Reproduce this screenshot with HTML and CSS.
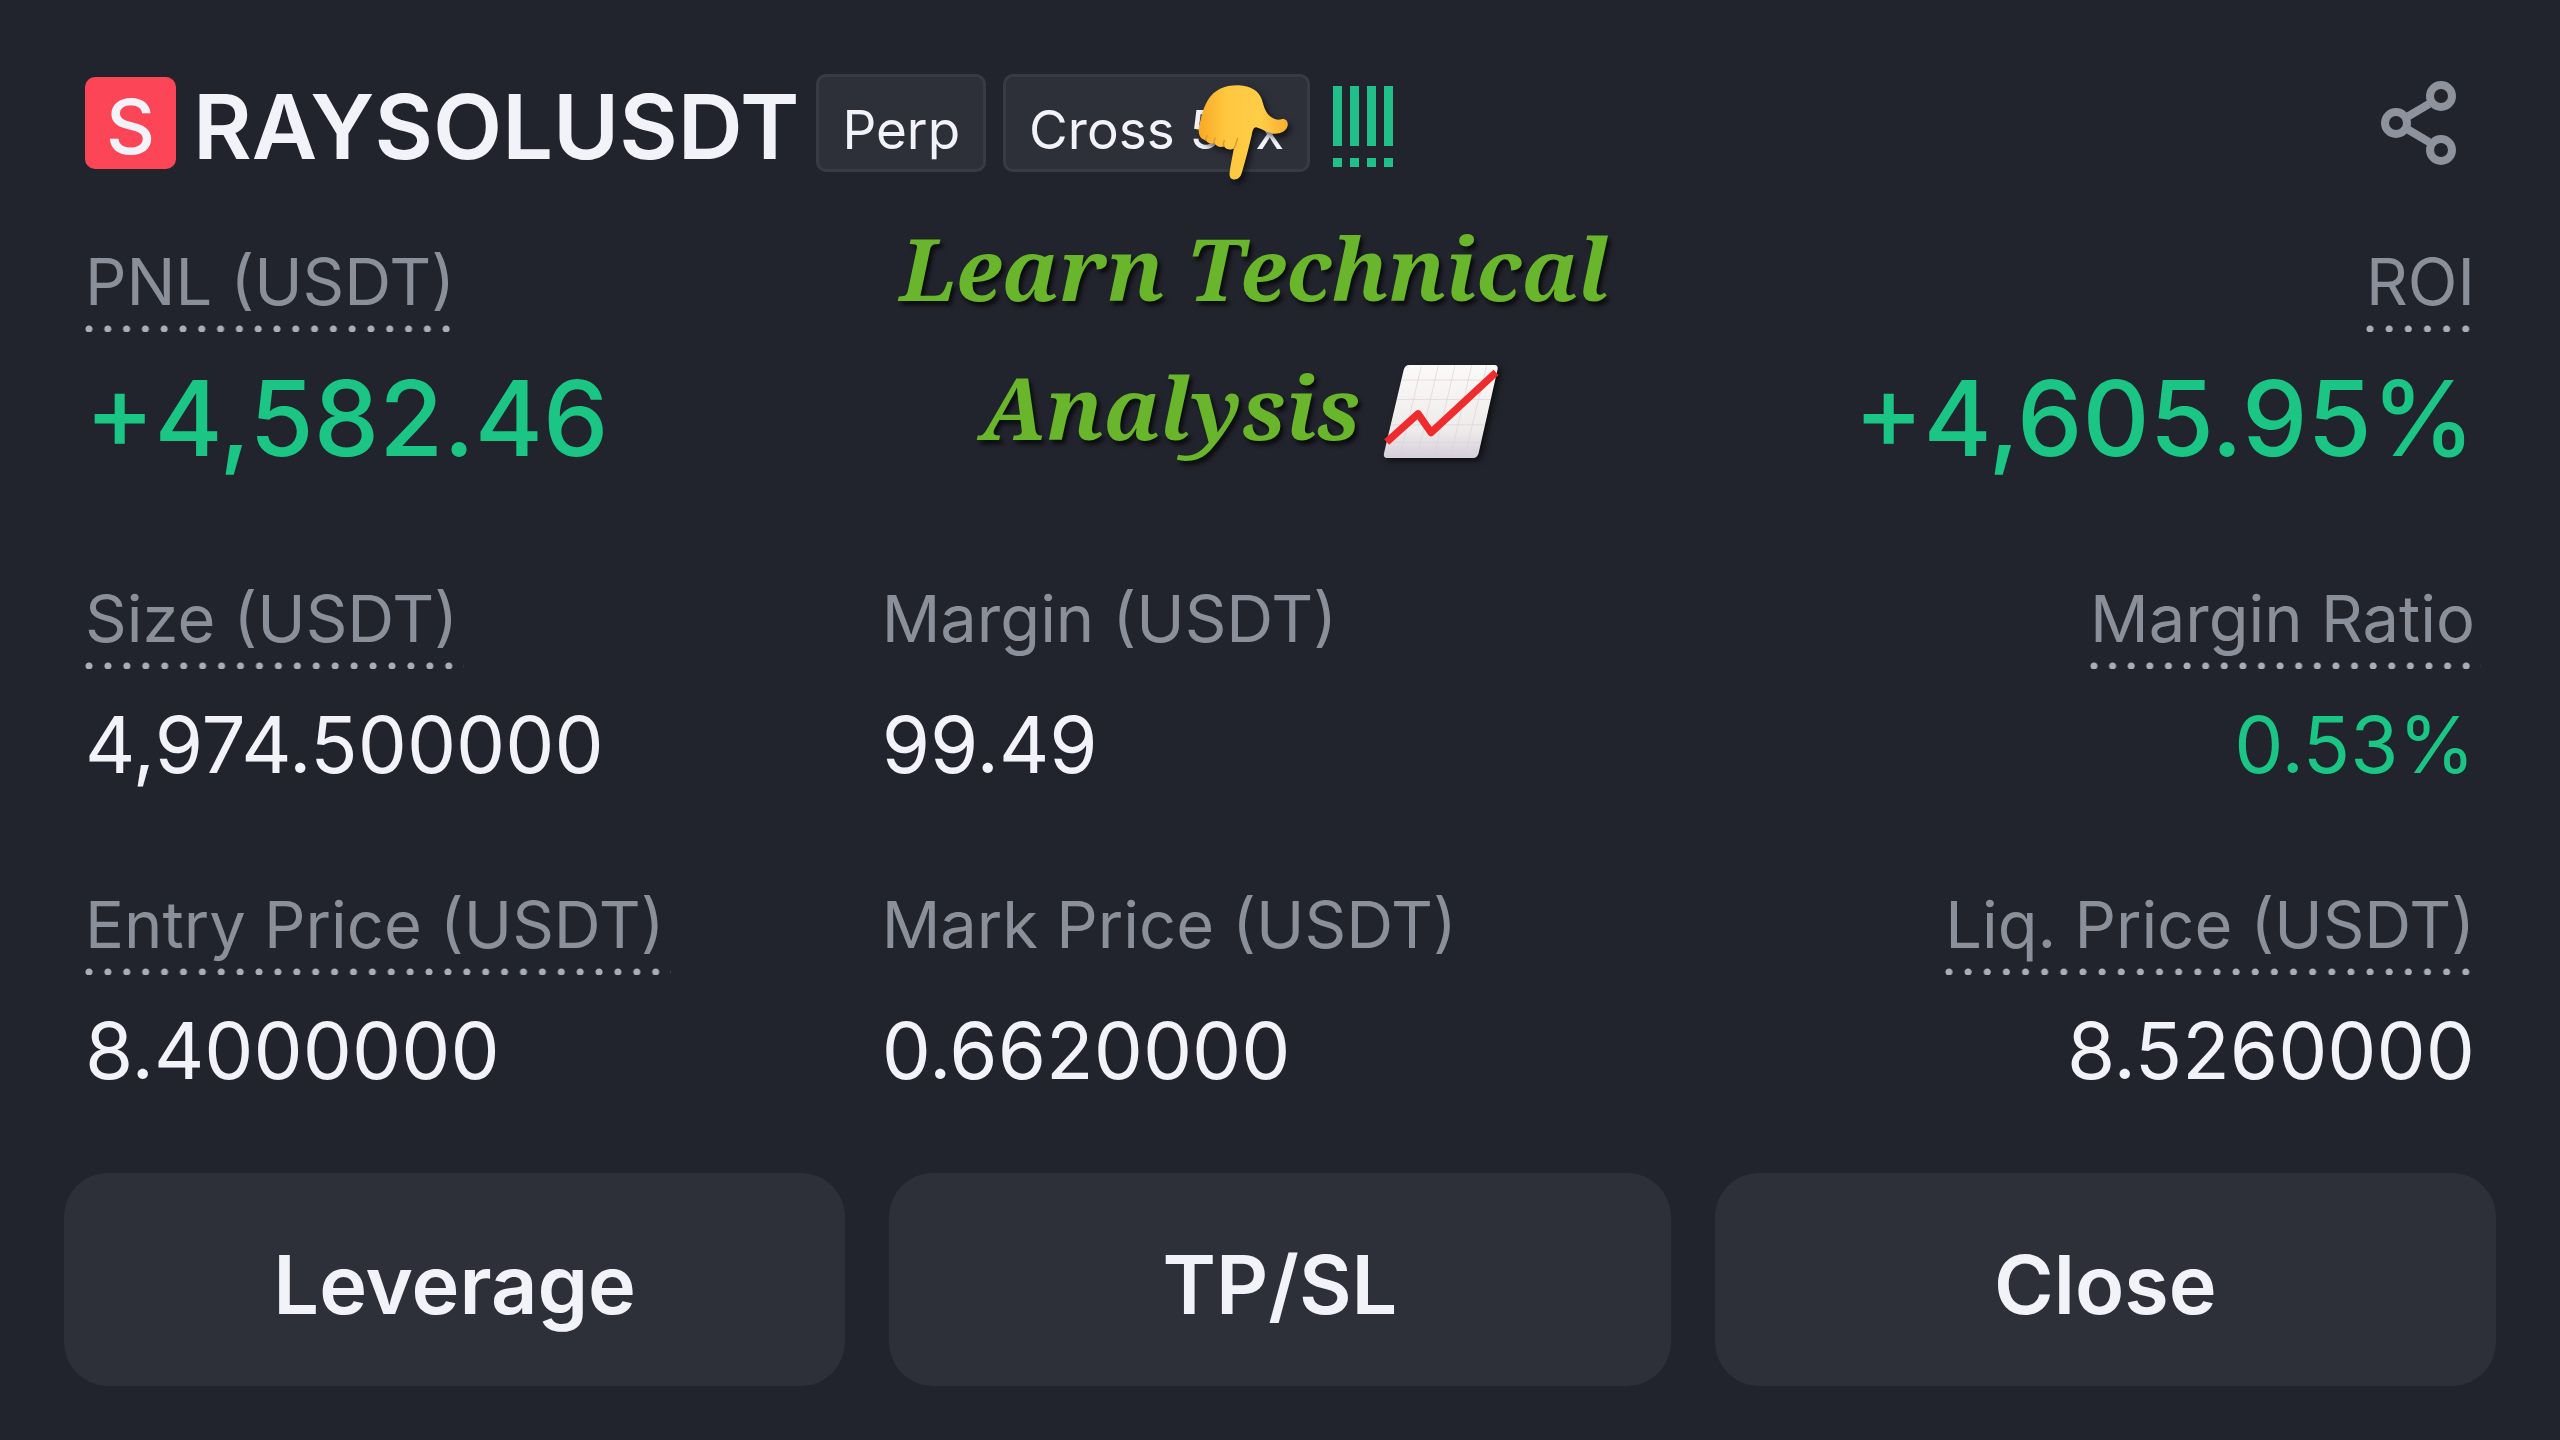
FILE: index.html
```html
<!DOCTYPE html>
<html lang="en">
<head>
    <meta charset="UTF-8">
    <meta name="viewport" content="width=device-width, initial-scale=1.0">
    <title>RAYSOLUSDT Position</title>
    <link rel="stylesheet" href="styles.css">
</head>
<body>
    <main class="position">
        <header class="header">
            <span class="side">S</span>
            <h1>RAYSOLUSDT</h1>
            <span class="tag">Perp</span>
            <span class="tag">Cross 50x
                <svg class="hand" viewBox="190 70 280 300" aria-hidden="true">
                    <defs>
                        <linearGradient id="skin" x1="0" y1="0" x2="1" y2="0">
                            <stop offset="0" stop-color="#f9a825"/>
                            <stop offset="0.3" stop-color="#ffc73f"/>
                            <stop offset="0.7" stop-color="#ffcd48"/>
                            <stop offset="1" stop-color="#f8ae2c"/>
                        </linearGradient>
                    </defs>
                    <path fill="url(#skin)" d="M195 212C200 180 206 150 222 122C242 88 275 75 316 76C352 78 375 92 384 116C391 136 394 158 412 171C424 180 436 182 446 178C458 176 465 186 463 198C459 214 441 223 422 222C402 220 386 208 368 203C360 203 358 212 355 224C347 262 335 305 325 340C321 354 312 361 301 360C291 359 287 352 288 341C291 315 297 290 301 266C293 272 279 272 271 260C262 264 249 262 242 250C231 254 222 250 218 243C203 240 195 230 195 212Z"/>
                    <path fill="none" stroke="#e8962a" stroke-width="4" stroke-linecap="round" d="M218 243C215 238 217 232 221 228M242 250C240 244 241 239 245 235M271 260C268 254 269 247 273 242M301 266C307 258 309 248 312 236"/>
                </svg>
            </span>
            <svg class="risk" viewBox="0 0 60 82" aria-hidden="true">
                <path d="M0 0h9v60h-9zM17 0h9v60h-9zM34 0h9v60h-9zM51 0h9v60h-9zM0 72h9v9h-9zM17 72h9v9h-9zM34 72h9v9h-9zM51 72h9v9h-9z"/>
            </svg>
            <button class="share" aria-label="Share">
                <svg viewBox="0 0 78 88">
                    <path d="M27 38L49 25M27 50L49 63"/>
                    <circle cx="16" cy="44" r="11"/>
                    <circle cx="61" cy="17" r="11"/>
                    <circle cx="61" cy="71" r="11"/>
                </svg>
            </button>
        </header>

        <section class="stats">
            <div class="stat main">
                <span class="label dotted">PNL (USDT)</span>
                <span class="value">+4,582.46</span>
            </div>
            <p class="banner">Learn Technical<br>Analysis
                <svg class="chart" viewBox="130 70 350 290" aria-hidden="true">
                    <defs>
                        <linearGradient id="paper" x1="0" y1="0" x2="0" y2="1">
                            <stop offset="0" stop-color="#fbfaf9"/>
                            <stop offset="0.7" stop-color="#eeecea"/>
                            <stop offset="1" stop-color="#d5cfda"/>
                        </linearGradient>
                    </defs>
                    <path fill="url(#paper)" d="M208 76H464Q474 76 473 88L416 340Q412 354 400 354H142Q130 354 133 340L192 90Q196 76 208 76Z"/>
                    <path fill="none" stroke="#d9d2d8" stroke-width="2" d="M186 121H463M172 179H450M155 255H432M142 307H421M245 78L180 352M295 78L232 352M345 78L282 352M395 78L332 352M440 78L374 352"/>
                    <path fill="none" stroke="#ef2b2d" stroke-width="22" stroke-linejoin="round" d="M141 306L235 222L274 278L468 98"/>
                </svg>
            </p>
            <div class="stat main right">
                <span class="label dotted">ROI</span>
                <span class="value">+4,605.95%</span>
            </div>

            <div class="stat">
                <span class="label dotted">Size (USDT)</span>
                <span class="value">4,974.500000</span>
            </div>
            <div class="stat">
                <span class="label">Margin (USDT)</span>
                <span class="value">99.49</span>
            </div>
            <div class="stat right">
                <span class="label dotted">Margin Ratio</span>
                <span class="value green">0.53%</span>
            </div>

            <div class="stat">
                <span class="label dotted">Entry Price (USDT)</span>
                <span class="value">8.4000000</span>
            </div>
            <div class="stat">
                <span class="label">Mark Price (USDT)</span>
                <span class="value">0.6620000</span>
            </div>
            <div class="stat right">
                <span class="label dotted">Liq. Price (USDT)</span>
                <span class="value">8.5260000</span>
            </div>
        </section>

        <div class="actions">
            <button>Leverage</button>
            <button>TP/SL</button>
            <button>Close</button>
        </div>
    </main>
</body>
</html>
```
FILE: styles.css
```css
* {
    box-sizing: border-box;
}
body {
    margin: 0;
    background: #21242c;
    color: #f1f3f8;
    font-family: Inter, "Liberation Sans", sans-serif;
}
.position {
    padding: 74px 64px 54px;
}
.header {
    display: flex;
    align-items: center;
    gap: 17px;
    padding: 0 21px;
    margin-bottom: 70px;
}
.side {
    width: 91px;
    height: 92px;
    padding-top: 3px;
    border-radius: 10px;
    background: #fd4558;
    font-size: 76px;
    font-weight: 500;
    line-height: 92px;
    text-align: center;
}
h1 {
    margin: 0;
    padding-top: 8px;
    font-size: 90px;
    font-weight: 600;
    line-height: 90px;
}
.tag {
    position: relative;
    height: 98px;
    padding: 13px 23px 0;
    border: 3px solid #383b45;
    border-radius: 10px;
    background: #2d3039;
    font-size: 53px;
    line-height: 80px;
    white-space: nowrap;
}
/* pointer lies over the leverage tag */
.hand {
    position: absolute;
    top: 6px;
    right: 17px;
    width: 93px;
    height: 100px;
    filter: drop-shadow(3px 4px 3px rgba(0, 0, 0, 0.6));
}
.risk {
    width: 60px;
    height: 82px;
    margin-top: 8px;
    margin-left: 6px;
    fill: #20c088;
}
.share {
    width: 78px;
    height: 88px;
    margin-right: 17px;
    margin-left: auto;
    padding: 0;
    border: none;
    background: none;
    cursor: pointer;
}
.share svg {
    display: block;
    fill: none;
    stroke: #8d929c;
    stroke-width: 8;
}
.stats {
    display: grid;
    grid-template-columns: repeat(3, minmax(0, 1fr));
    row-gap: 90px;
    padding: 0 21px;
}
.stat {
    display: flex;
    flex-direction: column;
    align-items: flex-start;
    gap: 26px;
    white-space: nowrap;
}
.right {
    align-items: flex-end;
}
.label {
    height: 90px;
    color: #8a8f99;
    font-size: 65px;
    line-height: 80px;
}
.dotted::after {
    content: "";
    display: block;
    height: 7px;
    margin-top: 3px;
    margin-right: -6px;
    background: radial-gradient(circle at 4px 4px, #a9adb5 3px, transparent 4px) left / 19px 7px round;
}
.value {
    font-size: 78px;
    line-height: 100px;
}
.main {
    padding-bottom: 11px;
}
.main .value {
    color: #1bc584;
    font-size: 104px;
    font-weight: 500;
    line-height: 120px;
}
.green {
    color: #1bc584;
}
.banner {
    justify-self: start;
    margin: -44px 0 0;
    padding-left: 18px;
    color: #69b52b;
    font-family: "Noto Serif", "DejaVu Serif Condensed", "DejaVu Serif", serif;
    font-size: 86px;
    font-style: italic;
    font-weight: bold;
    line-height: 139px;
    text-align: center;
    text-shadow: 3px 4px 4px rgba(0, 0, 0, 0.7);
    white-space: nowrap;
}
.chart {
    width: 117px;
    height: 97px;
    margin-right: 28px;
    vertical-align: -20px;
    filter: drop-shadow(3px 3px 3px rgba(0, 0, 0, 0.6));
}
.actions {
    display: grid;
    grid-template-columns: repeat(3, 1fr);
    gap: 44px;
    margin-top: 72px;
}
.actions button {
    padding: 62px 0 51px;
    border: none;
    border-radius: 44px;
    background: #2d3039;
    color: inherit;
    font-family: inherit;
    font-size: 81px;
    font-weight: 600;
    line-height: 100px;
    cursor: pointer;
}
.actions button:hover {
    background: #383b45;
}
```
